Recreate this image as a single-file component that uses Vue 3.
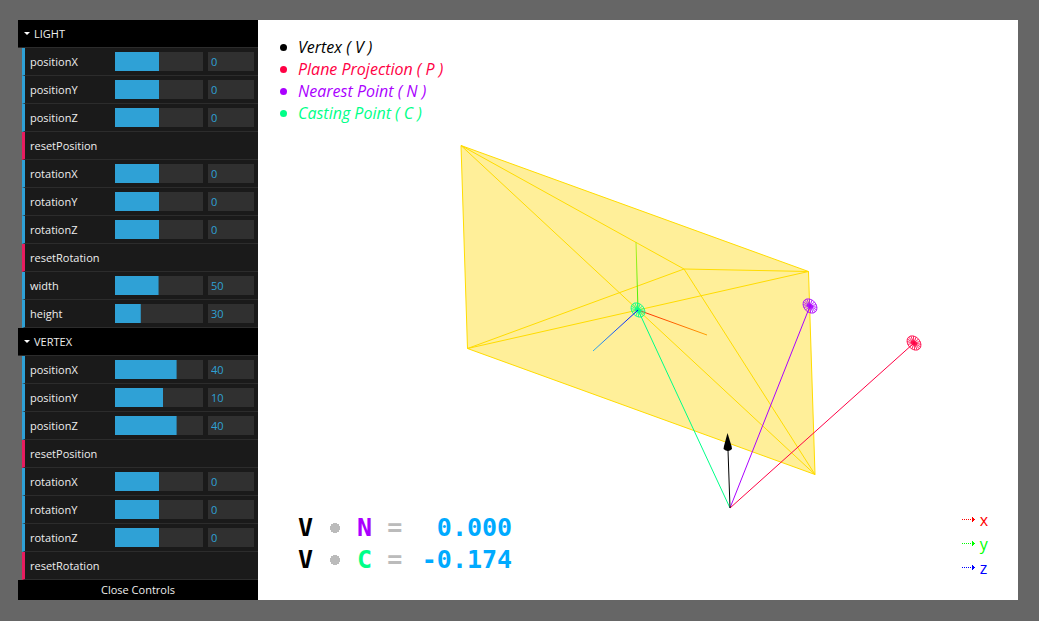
<template>
  <div class="page">
    <aside class="gui">
      <section v-for="folder in folders" :key="folder.name" class="folder">
        <button class="folder-title" type="button" @click="folder.open = !folder.open">
          <svg class="caret" viewBox="0 0 6 3"><path d="M0 0h6L3 3z" /></svg>
          {{ folder.name }}
        </button>
        <ul v-show="folder.open && open" class="rows">
          <li
            v-for="item in folder.items"
            :key="item.label"
            :class="['row', item.action ? 'row-action' : 'row-number']"
          >
            <button v-if="item.action" class="action" type="button" @click="reset(folder, item.action)">
              {{ item.label }}
            </button>
            <template v-else>
              <label class="label" :for="fieldId(folder, item)">{{ item.label }}</label>
              <input
                v-model.number="item.value"
                class="slider"
                type="range"
                :min="item.min"
                :max="item.max"
                :aria-label="item.label"
                :style="{ '--fill': fill(item) }"
              />
              <input :id="fieldId(folder, item)" v-model.number="item.value" class="value" type="text" />
            </template>
          </li>
        </ul>
      </section>
      <button class="close" type="button" @click="open = !open">
        {{ open ? 'Close Controls' : 'Open Controls' }}
      </button>
    </aside>

    <main class="stage">
      <svg class="scene" viewBox="0 0 760 580" fill="none">
        <defs>
          <linearGradient id="axis-x" gradientUnits="userSpaceOnUse" x1="380" y1="290" x2="449" y2="315">
            <stop offset="0" stop-color="#ff2000" />
            <stop offset="1" stop-color="#ffa000" />
          </linearGradient>
          <linearGradient id="axis-y" gradientUnits="userSpaceOnUse" x1="380" y1="290" x2="378" y2="222">
            <stop offset="0" stop-color="#30f000" />
            <stop offset="1" stop-color="#b8f020" />
          </linearGradient>
          <linearGradient id="axis-z" gradientUnits="userSpaceOnUse" x1="380" y1="290" x2="335" y2="331">
            <stop offset="0" stop-color="#0000ff" />
            <stop offset="1" stop-color="#30b0e8" />
          </linearGradient>
        </defs>

        <path class="plane" d="M203 125.500L550.500 251.500L557 454.500L209.500 328.500Z" />
        <path class="wire" d="M203 125.500L557 454.500M550.500 251.500L209.500 328.500" />
        <path class="wire" d="M203 125.500L426 249L550.500 251.500M209.500 328.500L426 249L557 454.500" />

        <path stroke="url(#axis-x)" d="M380 290L449 315" />
        <path stroke="url(#axis-y)" d="M380 290L378 222" />

        <path class="ray casting" d="M472 488L380 290" />
        <path class="ray nearest" d="M472 488L552 286" />
        <path class="ray projection" d="M472 488L656 323" />

        <g v-for="m in markers" :key="m.name" :class="['marker', m.name]" :transform="m.transform">
          <ellipse rx="8" ry="6" />
          <ellipse class="core" rx="3.500" ry="2.500" />
          <path :d="spokes" />
        </g>
        <path stroke="url(#axis-z)" d="M380 290L335 331" />

        <path class="arrow" d="M472 488L470 430" />
        <path class="arrow-head" d="M469.500 413L466 426L465.500 429Q470 433 474 429L473.500 426Z" />
      </svg>

      <ul class="legend">
        <li v-for="l in legend" :key="l.name" :class="l.name">{{ l.text }}</li>
      </ul>

      <div class="bottom">
        <div class="readout">
          <p v-for="r in readout" :key="r.letter">
            <b class="vertex">V</b> <span class="op dot"></span> <b :class="r.name">{{ r.letter }}</b>
            <span class="op">=</span> <span class="number">{{ r.value }}</span>
          </p>
        </div>
        <ul class="axes">
          <li v-for="axis in ['x', 'y', 'z']" :key="axis" :class="'axis-' + axis">
            <svg class="axis-arrow" viewBox="0 0 14 8">
              <path stroke-dasharray="1 1" d="M0 3.500H11" />
              <path d="M10.500 1v5M11.500 2v3M12.500 3v1" />
            </svg>
            {{ axis }}
          </li>
        </ul>
      </div>
    </main>
  </div>
</template>

<script setup>
import { reactive, ref } from 'vue'

const open = ref(true)

const slider = (label, value, min, max) => ({ label, value, min, max })

const folders = reactive([
  {
    name: 'LIGHT',
    open: true,
    items: [
      slider('positionX', 0, -100, 100),
      slider('positionY', 0, -100, 100),
      slider('positionZ', 0, -100, 100),
      { label: 'resetPosition', action: 'position' },
      slider('rotationX', 0, -180, 180),
      slider('rotationY', 0, -180, 180),
      slider('rotationZ', 0, -180, 180),
      { label: 'resetRotation', action: 'rotation' },
      slider('width', 50, 1, 100),
      slider('height', 30, 1, 100)
    ]
  },
  {
    name: 'VERTEX',
    open: true,
    items: [
      slider('positionX', 40, -100, 100),
      slider('positionY', 10, -100, 100),
      slider('positionZ', 40, -100, 100),
      { label: 'resetPosition', action: 'position' },
      slider('rotationX', 0, -180, 180),
      slider('rotationY', 0, -180, 180),
      slider('rotationZ', 0, -180, 180),
      { label: 'resetRotation', action: 'rotation' }
    ]
  }
])

const legend = [
  { name: 'vertex', text: 'Vertex ( V )' },
  { name: 'projection', text: 'Plane Projection ( P )' },
  { name: 'nearest', text: 'Nearest Point ( N )' },
  { name: 'casting', text: 'Casting Point ( C )' }
]

const readout = [
  { name: 'nearest', letter: 'N', value: '0.000' },
  { name: 'casting', letter: 'C', value: '-0.174' }
]

const markers = [
  { name: 'casting', transform: 'translate(380 290) rotate(48)' },
  { name: 'nearest', transform: 'translate(552 286) rotate(48)' },
  { name: 'projection', transform: 'translate(656 323) rotate(48)' }
]

// wireframe sphere seen from its pole
const spokes = Array.from({ length: 16 }, (_, i) => {
  const a = (i * Math.PI) / 8
  return `M0 0L${(8 * Math.cos(a)).toFixed(2)} ${(6 * Math.sin(a)).toFixed(2)}`
}).join('')

function fieldId(folder, item) {
  return folder.name + '-' + item.label
}

function fill(item) {
  return ((item.value - item.min) / (item.max - item.min)) * 100 + '%'
}

function reset(folder, prefix) {
  folder.items.forEach(item => {
    if (!item.action && item.label.startsWith(prefix)) item.value = 0
  })
}
</script>

<style>
body {
  margin: 0;
  background: #666;
}
</style>

<style scoped>
* {
  box-sizing: border-box;
}

ul {
  margin: 0;
  padding: 0;
  list-style: none;
}

button {
  border: 0;
  color: #eee;
  font: inherit;
  cursor: pointer;
}

.page {
  display: flex;
  min-height: 100vh;
  padding: 20px 21px 21px 18px;
}

.gui {
  flex: none;
  width: 240px;
  color: #eee;
  font: 11px/27px "Lucida Grande", "Open Sans", sans-serif;
}

.folder-title {
  display: flex;
  align-items: center;
  gap: 4px;
  width: 100%;
  height: 28px;
  padding: 0 6px;
  border-bottom: 1px solid #2c2c2c;
  background: #000;
}

.caret {
  width: 6px;
  height: 3px;
  fill: #fff;
}

.rows {
  padding-left: 4px;
}

.row {
  display: flex;
  align-items: center;
  height: 28px;
  padding: 0 4px 0 5px;
  border-bottom: 1px solid #2c2c2c;
  border-left: 3px solid #2fa1d6;
  background: #1a1a1a;
}

.row-action {
  border-left-color: #e61d5f;
}

.action {
  flex: 1;
  padding: 0;
  background: none;
  text-align: left;
}

.label {
  flex: 1;
}

.slider {
  width: 88px;
  height: 19px;
  margin: 0 5px 0 0;
  appearance: none;
  background: linear-gradient(#2fa1d6, #2fa1d6) 0 0 / var(--fill) 100% no-repeat #303030;
  cursor: ew-resize;
}

.slider::-webkit-slider-thumb {
  appearance: none;
  width: 1px;
  height: 19px;
}

.value {
  width: 46px;
  height: 19px;
  padding: 0 3px;
  border: 0;
  outline: none;
  background: #303030;
  color: #2fa1d6;
  font: inherit;
  line-height: 19px;
}

.close {
  display: block;
  width: 100%;
  height: 20px;
  padding: 0;
  background: #000;
  line-height: 20px;
}

.stage {
  position: relative;
  display: flex;
  flex: 1;
  flex-direction: column;
  justify-content: space-between;
  padding: 16px 30px 20px 40px;
  background: #fff;
  font-family: "Open Sans", sans-serif;
}

.scene {
  position: absolute;
  inset: 0;
  width: 100%;
  height: 100%;
}

.plane {
  fill: #ffef99;
  stroke: #ffdc00;
}

.wire {
  stroke: #ffdc00;
}

.vertex {
  color: #000;
}

.projection {
  color: #ff0044;
}

.nearest {
  color: #aa00ff;
}

.casting {
  color: #00ff88;
}

.ray {
  stroke: currentColor;
}

.marker {
  stroke: currentColor;
  stroke-width: 0.8;
}

.core {
  fill: currentColor;
  fill-opacity: 0.5;
  stroke: none;
}

.arrow {
  stroke: #000;
}

.arrow-head {
  fill: #000;
}

.legend,
.bottom {
  position: relative;
}

.legend {
  font-size: 16px;
  font-style: italic;
  line-height: 22px;
}

.legend li {
  display: flex;
  align-items: center;
}

.legend li::before {
  content: "";
  width: 7px;
  height: 7px;
  margin: 0 11px 0 -18px;
  border-radius: 50%;
  background: currentColor;
}

.bottom {
  display: flex;
  align-items: flex-end;
  justify-content: space-between;
}

.readout {
  padding-bottom: 4px;
  font: 25px/32px "DejaVu Sans Mono", monospace;
}

.readout p {
  display: flex;
  gap: 15px;
  margin: 0;
}

.op {
  width: 14px;
  color: #bbb;
  font-weight: bold;
}

.dot {
  align-self: center;
  height: 10px;
  background: radial-gradient(circle, #bbb 5px, transparent 5px);
}

.number {
  width: 96px;
  color: #00aaff;
  font-weight: bold;
  text-align: right;
}

.axes {
  font-size: 16px;
  line-height: 24px;
}

.axes li {
  display: flex;
  align-items: center;
  gap: 4px;
}

.axis-arrow {
  width: 14px;
  height: 8px;
  fill: none;
  stroke: currentColor;
}

.axis-x {
  color: #ff0000;
}

.axis-y {
  color: #00ff00;
}

.axis-z {
  color: #0000ff;
}
</style>
